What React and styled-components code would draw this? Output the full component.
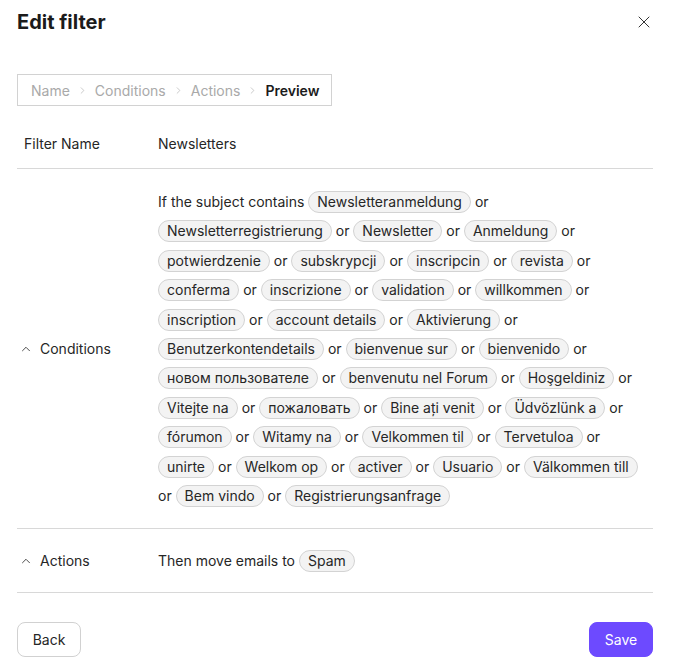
import React from "react";
import styled, { createGlobalStyle } from "styled-components";
import { ChevronRight, ChevronUp, X } from "lucide-react";

const keywords = [
  "Newsletteranmeldung",
  "Newsletterregistrierung",
  "Newsletter",
  "Anmeldung",
  "potwierdzenie",
  "subskrypcji",
  "inscripcin",
  "revista",
  "conferma",
  "inscrizione",
  "validation",
  "willkommen",
  "inscription",
  "account details",
  "Aktivierung",
  "Benutzerkontendetails",
  "bienvenue sur",
  "bienvenido",
  "новом пользователе",
  "benvenutu nel Forum",
  "Hoşgeldiniz",
  "Vitejte na",
  "пожаловать",
  "Bine ați venit",
  "Üdvözlünk a",
  "fórumon",
  "Witamy na",
  "Velkommen til",
  "Tervetuloa",
  "unirte",
  "Welkom op",
  "activer",
  "Usuario",
  "Välkommen till",
  "Bem vindo",
  "Registrierungsanfrage",
];

const steps = ["Name", "Conditions", "Actions", "Preview"];

const App = () => {
  return (
    <>
      <Global />
      <Dialog>
        <Header>
          <Title>Edit filter</Title>
          <CloseButton aria-label="Close">
            <X size={20} strokeWidth={1.2} />
          </CloseButton>
        </Header>

        <Breadcrumb>
          {steps.map((step, i) => (
            <React.Fragment key={step}>
              {i > 0 && (
                <Sep>
                  <ChevronRight size={11} strokeWidth={1.5} />
                </Sep>
              )}
              <Step $active={i === steps.length - 1}>{step}</Step>
            </React.Fragment>
          ))}
        </Breadcrumb>

        <Table>
          <Row $compact>
            <Label>Filter Name</Label>
            <Value>Newsletters</Value>
          </Row>
          <Row $pad="18px 0">
            <Label>
              <ChevronUp size={14} strokeWidth={1.5} />
              Conditions
            </Label>
            <Value>
              If the subject contains{" "}
              {keywords.map((word, i) => (
                <React.Fragment key={word}>
                  <Chip>{word}</Chip>
                  {i < keywords.length - 1 && " or "}
                </React.Fragment>
              ))}
            </Value>
          </Row>
          <Row $pad="17px 0 16px">
            <Label>
              <ChevronUp size={14} strokeWidth={1.5} />
              Actions
            </Label>
            <Value>
              Then move emails to <Chip>Spam</Chip>
            </Value>
          </Row>
        </Table>

        <Footer>
          <Button>Back</Button>
          <Button $primary>Save</Button>
        </Footer>
      </Dialog>
    </>
  );
};

const Global = createGlobalStyle`
  body {
    margin: 0;
    background: #fff;
    font-family: Inter, "Noto Sans", sans-serif;
    color: #262626;
  }
`;

const Dialog = styled.div`
  width: 681px;
  box-sizing: border-box;
  padding: 10px 28px 0 17px;
`;

const Header = styled.div`
  display: flex;
  justify-content: space-between;
  align-items: center;
  height: 24px;
`;

const Title = styled.h1`
  margin: 0;
  font-size: 20px;
  line-height: 24px;
  font-weight: 700;
  color: #1b1b1b;
`;

const CloseButton = styled.button`
  display: flex;
  align-items: center;
  justify-content: center;
  border: none;
  background: none;
  padding: 0;
  margin-right: -1px;
  color: #333;
  cursor: pointer;
`;

const Breadcrumb = styled.nav`
  display: inline-flex;
  align-items: center;
  margin-top: 40px;
  height: 32px;
  box-sizing: border-box;
  padding: 0 12px 0 13px;
  border: 1px solid #d2d2d2;
  gap: 7px;
  font-size: 14px;
`;

const Step = styled.span`
  color: ${(p) => (p.$active ? "#1b1b1b" : "#a9a9a9")};
  font-weight: ${(p) => (p.$active ? 600 : 400)};
`;

const Sep = styled.span`
  display: flex;
  color: #b3b3b3;
`;

const Table = styled.div`
  margin-top: 14px;
`;

const Row = styled.div`
  display: grid;
  grid-template-columns: 141px 1fr;
  align-items: center;
  padding: ${(p) => (p.$compact ? "14px 0" : p.$pad)};
  border-bottom: 1px solid #d8d8d8;
  font-size: 14px;
  line-height: ${(p) => (p.$compact ? "20px" : "29.4px")};
`;

const Label = styled.div`
  display: flex;
  align-items: center;
  gap: 7px;
  padding-left: 7px;
  color: #262626;

  svg {
    margin-left: -5px;
    color: #333;
  }
`;

const Value = styled.div`
  color: #262626;
`;

const Chip = styled.span`
  display: inline-block;
  vertical-align: baseline;
  line-height: 20px;
  padding: 0 8px;
  border: 1px solid #d3d3d3;
  border-radius: 11px;
  background: #f3f3f3;
  color: #262626;
  white-space: nowrap;
`;

const Footer = styled.div`
  display: flex;
  justify-content: space-between;
  margin-top: 29px;
`;

const Button = styled.button`
  height: 35px;
  width: 64px;
  border-radius: 8px;
  font-family: inherit;
  font-size: 14px;
  cursor: pointer;
  border: 1px solid ${(p) => (p.$primary ? "#6d4aff" : "#d1d1d1")};
  background: ${(p) => (p.$primary ? "#6d4aff" : "#fff")};
  color: ${(p) => (p.$primary ? "#fff" : "#262626")};
`;

export default App;
